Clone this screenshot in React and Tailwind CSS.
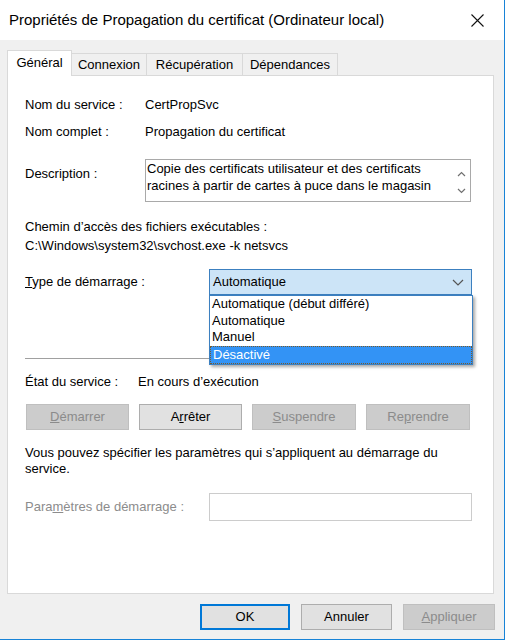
import React from "react";

const font = { fontFamily: '"Liberation Sans", Arial, sans-serif' };

function Btn({ children, w, disabled, primary }) {
  let cls = "h-[26px] flex items-center justify-center text-[13px] ";
  if (disabled) cls += "bg-[#cccccc] border border-[#bfbfbf] text-[#8b8b8b]";
  else if (primary) cls += "bg-[#e1e1e1] border-2 border-[#0078d7] text-black";
  else cls += "bg-[#e1e1e1] border border-[#adadad] text-black";
  return <div className={cls} style={{ width: w }}>{children}</div>;
}

function Chevron({ up, className }) {
  return (
    <svg width="9" height="6" viewBox="0 0 9 6" className={className}>
      <path d={up ? "M1 5 L4.5 1.5 L8 5" : "M1 1 L4.5 4.5 L8 1"} fill="none" stroke="#707070" strokeWidth="1.2" />
    </svg>
  );
}

export default function App() {
  return (
    <div className="w-[506px] h-[643px] bg-white" style={font}>
      <div className="w-[505px] h-[640px] border-r border-b border-[#1883d7] flex flex-col">
        {/* Title bar */}
        <div className="h-[40px] bg-white flex items-center justify-between pl-[9px] pr-[20px] shrink-0">
          <div className="text-[15px] text-black leading-none -mt-[1px]">Propriétés de Propagation du certificat (Ordinateur local)</div>
          <svg width="13" height="13" viewBox="0 0 13 13">
            <path d="M0.5 0.5 L12.5 12.5 M12.5 0.5 L0.5 12.5" stroke="#111" strokeWidth="1.1" />
          </svg>
        </div>
        {/* Body */}
        <div className="flex-1 bg-[#f0f0f0] pl-[7px] pr-[10px] pt-[10px] flex flex-col">
          {/* Tabs */}
          <div className="flex items-end h-[25px] relative z-10 text-[13px] text-black">
            <div className="w-[65px] h-[26px] bg-white border border-[#d9d9d9] border-b-0 flex items-center justify-center pb-[2px] -mb-[1px]">Général</div>
            <div className="w-[75px] h-[22px] bg-[#f0f0f0] border border-[#d9d9d9] border-l-0 border-b-0 flex items-center justify-center">Connexion</div>
            <div className="w-[96px] h-[22px] bg-[#f0f0f0] border border-[#d9d9d9] border-l-0 border-b-0 flex items-center justify-center">Récupération</div>
            <div className="w-[95px] h-[22px] bg-[#f0f0f0] border border-[#d9d9d9] border-l-0 border-b-0 flex items-center justify-center">Dépendances</div>
          </div>
          {/* Panel */}
          <div className="w-[487px] h-[519px] bg-white border border-[#d9d9d9] relative pl-[17px] text-[13px] text-black">
            <div className="flex mt-[21px] leading-[16px]">
              <div className="w-[120px]">Nom du service :</div>
              <div>CertPropSvc</div>
            </div>
            <div className="flex mt-[11px] leading-[16px]">
              <div className="w-[120px]">Nom complet :</div>
              <div>Propagation du certificat</div>
            </div>
            <div className="flex mt-[19px]">
              <div className="w-[120px] mt-[7px] leading-[16px]">Description :</div>
              <div className="w-[326px] h-[43px] border border-[#a9a9a9] bg-white flex">
                <div className="flex-1 pl-[1px] pt-[0px] leading-[17px] whitespace-nowrap overflow-hidden">
                  Copie des certificats utilisateur et des certificats<br />racines à partir de cartes à puce dans le magasin
                </div>
                <div className="w-[17px] flex flex-col items-center pt-[11px] gap-[11px]">
                  <Chevron up />
                  <Chevron />
                </div>
              </div>
            </div>
            <div className="mt-[15px] leading-[19px]">
              <div>Chemin d’accès des fichiers exécutables :</div>
              <div>C:\Windows\system32\svchost.exe -k netsvcs</div>
            </div>
            <div className="flex items-center mt-[14px]">
              <div className="w-[184px] leading-[16px]"><span className="underline">T</span>ype de démarrage :</div>
              <div className="w-[263px] h-[26px] bg-[#cce4f7] border border-[#3c80c0] flex items-center justify-between pl-[3px] pr-[7px]">
                <span>Automatique</span>
                <svg width="12" height="7" viewBox="0 0 12 7">
                  <path d="M1 1 L6 6 L11 1" fill="none" stroke="#555" strokeWidth="1.2" />
                </svg>
              </div>
            </div>
            <div className="mt-[63px] w-[446px] h-[1px] bg-[#a0a0a0]"></div>
            <div className="flex mt-[15px] leading-[16px]">
              <div className="w-[113px]">État du service :</div>
              <div>En cours d’exécution</div>
            </div>
            <div className="flex gap-[10px] mt-[14px] ml-[1px]">
              <Btn w={103} disabled><span className="underline">D</span>émarrer</Btn>
              <Btn w={103}>A<span className="underline">r</span>rêter</Btn>
              <Btn w={104} disabled><span className="underline">S</span>uspendre</Btn>
              <Btn w={104} disabled>Re<span className="underline">p</span>rendre</Btn>
            </div>
            <div className="mt-[15px] leading-[16px]">
              Vous pouvez spécifier les paramètres qui s’appliquent au démarrage du<br />service.
            </div>
            <div className="flex items-center mt-[16px]">
              <div className="w-[184px] text-[#8c8c8c] leading-[16px]">Para<span className="underline">m</span>ètres de démarrage :</div>
              <div className="w-[263px] h-[28px] border border-[#cccccc] bg-white"></div>
            </div>

            {/* Dropdown list overlay */}
            <div className="absolute left-[201px] top-[219px] w-[264px] bg-white border border-[#3c80c0] shadow-[2px_2px_3px_rgba(0,0,0,0.35)] leading-[16.5px] z-20">
              <div className="pl-[2px]">Automatique (début différé)</div>
              <div className="pl-[2px]">Automatique</div>
              <div className="pl-[2px]">Manuel</div>
              <div className="pl-[2px] bg-[#3393f5] text-white border border-dotted border-[#7a5a2a]">Désactivé</div>
            </div>
          </div>
          {/* Bottom buttons */}
          <div className="flex justify-end gap-[11px] mt-[10px] -mr-[1px]">
            <Btn w={90} primary>OK</Btn>
            <Btn w={91}>Annuler</Btn>
            <Btn w={92} disabled><span className="underline">A</span>ppliquer</Btn>
          </div>
        </div>
      </div>
    </div>
  );
}
